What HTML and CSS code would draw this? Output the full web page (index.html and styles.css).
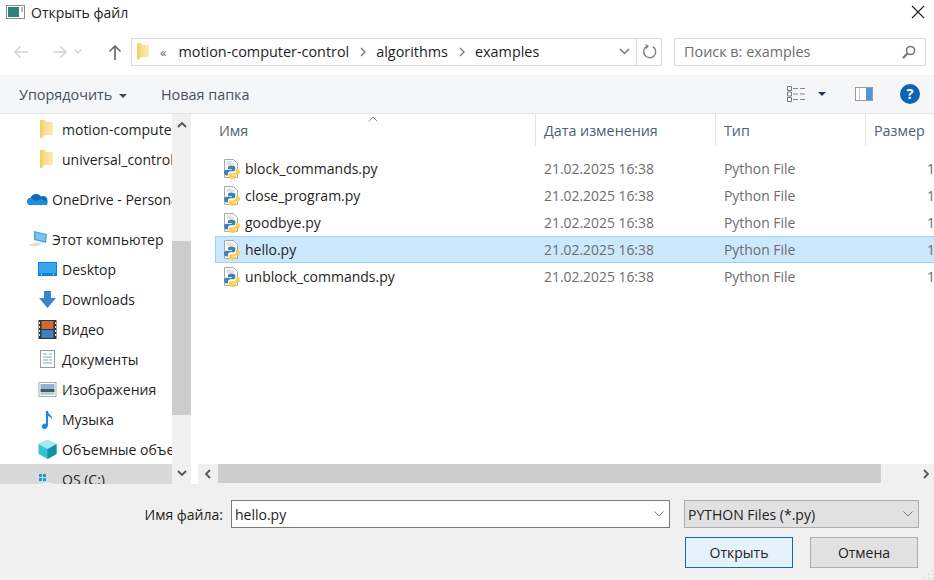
FILE: index.html
```html
<!DOCTYPE html>
<html lang="ru">
<head>
  <meta charset="UTF-8" />
  <title>Открыть файл</title>
  <link rel="stylesheet" href="styles.css">
</head>
<body>

<svg class="defs" width="0" height="0">
  <defs>
    <linearGradient id="folderFill" x1="0" y1="0" x2="1" y2="0">
      <stop offset="0" stop-color="#f3cc62" />
      <stop offset=".35" stop-color="#f8dc8a" />
      <stop offset="1" stop-color="#fcebb0" />
    </linearGradient>
    <symbol id="folder" viewBox="0 0 13 18">
      <path d="M0 0h5l1 2h7v13H4l-2 3H0z" fill="url(#folderFill)" />
    </symbol>
    <symbol id="pyfile" viewBox="0 0 18 20">
      <path d="M1.500.5h9l4 4v14h-13z" fill="#fff" stroke="#a8a8a8" />
      <path d="M3.500 3h5M3.500 5h8" stroke="#c4c4c4" />
      <path d="M8 6.500c-2 0-3 .7-3 2V10h4v.7H3.500C2 10.700 1 12 1 13.500s1 3 2.500 3H5v-2c0-1.200 1-2.200 2.200-2.200h3.300c1 0 1.800-.8 1.800-1.800V8.500c0-1.200-1.800-2-4.300-2z" fill="#3f7fb3" />
      <path d="M8 6.500c-2 0-3 .7-3 2V10h4v.7H3.500C2 10.700 1 12 1 13.500s1 3 2.500 3H5v-2c0-1.200 1-2.200 2.200-2.200h3.300c1 0 1.800-.8 1.800-1.800V8.500c0-1.200-1.800-2-4.300-2z" fill="#f6d04d" transform="rotate(180 9 13.250)" />
    </symbol>
  </defs>
</svg>

<div class="dialog">

  <header class="titlebar">
    <svg class="app-icon" width="19" height="14" viewBox="0 0 19 14">
      <rect x=".5" y=".5" width="18" height="13" fill="#fff" stroke="#8c8c8c" />
      <rect x="2" y="2" width="11" height="10" fill="#2f7f7a" />
      <rect x="15" y="2" width="2" height="5" fill="#b8b8b8" />
    </svg>
    <span class="title">Открыть файл</span>
    <svg class="close" width="14" height="14" viewBox="0 0 14 14">
      <path d="M1 1l12 12M13 1L1 13" stroke="#222" stroke-width="1.100" fill="none" />
    </svg>
  </header>

  <nav class="navbar">
    <div class="nav-buttons">
      <svg width="16" height="14" viewBox="0 0 16 14"><path d="M15 7H2M7.500 1.500L2 7l5.500 5.500" stroke="#d3d3d3" stroke-width="1.500" fill="none" /></svg>
      <svg class="nav-fwd" width="16" height="14" viewBox="0 0 16 14"><path d="M1 7h13M8.500 1.500L14 7l-5.500 5.500" stroke="#d3d3d3" stroke-width="1.500" fill="none" /></svg>
      <svg class="nav-down" width="8" height="5" viewBox="0 0 8 5"><path d="M.5.500L4 4 7.500.5" stroke="#d0d0d0" stroke-width="1.200" fill="none" /></svg>
      <svg class="nav-up" width="14" height="16" viewBox="0 0 14 16"><path d="M7 16V2M1.500 7.500L7 2l5.500 5.500" stroke="#6d6d6d" stroke-width="1.700" fill="none" /></svg>
    </div>
    <div class="address">
      <svg class="addr-folder" width="12" height="17"><use href="#folder" /></svg>
      <span class="crumb-more">«</span>
      <span class="crumb">motion-computer-control</span>
      <svg class="crumb-sep" width="6" height="10" viewBox="0 0 6 10"><path d="M1 1l4 4-4 4" stroke="#777" stroke-width="1.300" fill="none" /></svg>
      <span class="crumb">algorithms</span>
      <svg class="crumb-sep" width="6" height="10" viewBox="0 0 6 10"><path d="M1 1l4 4-4 4" stroke="#777" stroke-width="1.300" fill="none" /></svg>
      <span class="crumb">examples</span>
      <svg class="addr-chevron" width="11" height="7" viewBox="0 0 11 7"><path d="M1 1l4.500 4.500L10 1" stroke="#777" stroke-width="1.500" fill="none" /></svg>
      <div class="addr-refresh">
        <svg width="15" height="15" viewBox="0 0 15 15"><path d="M5.500 2.100A6 6 0 1 0 11 2.700" stroke="#808080" stroke-width="1.400" fill="none" /><path d="M3.500 .5l2.500 1.700L4 4.500" stroke="#808080" stroke-width="1.200" fill="none" /></svg>
      </div>
    </div>
    <div class="search">
      <span>Поиск в: examples</span>
      <svg width="14" height="14" viewBox="0 0 14 14"><circle cx="8.500" cy="5.500" r="4" stroke="#777" stroke-width="1.600" fill="none" /><path d="M5.500 8.500L1 13" stroke="#777" stroke-width="2.200" /></svg>
    </div>
  </nav>

  <div class="toolbar">
    <div class="tool organize">Упорядочить <i class="caret"></i></div>
    <div class="tool new-folder">Новая папка</div>
    <div class="tool-icons">
      <svg class="view-icon" width="18" height="16" viewBox="0 0 18 16">
        <path d="M.5.500h4v4h-4zM.5 6h4v4h-4zM.5 11.500h4v4h-4z" fill="#fff" stroke="#777" />
        <path d="M6 2.500h5M13 2.500h5M6 8h5M13 8h5M6 13.500h5M13 13.500h5" stroke="#888" />
      </svg>
      <i class="caret caret-dark"></i>
      <svg class="pane-icon" width="18" height="14" viewBox="0 0 18 14">
        <rect x=".5" y=".5" width="17" height="13" fill="#fff" stroke="#9a9a9a" />
        <rect x="4" y="1" width="1" height="12" fill="#c8c8c8" />
        <rect x="11" y="1" width="6" height="12" fill="#4a97dd" />
      </svg>
      <svg class="help-icon" width="20" height="20" viewBox="0 0 20 20">
        <circle cx="10" cy="10" r="10" fill="#0d64b4" />
        <text x="10" y="15" text-anchor="middle" class="help-mark">?</text>
      </svg>
    </div>
  </div>

  <main class="panes">
    <aside class="sidebar">
      <ul class="tree">
        <li class="item indent"><svg class="tree-folder" width="13" height="18"><use href="#folder" /></svg>motion-computer-control</li>
        <li class="item indent"><svg class="tree-folder" width="13" height="18"><use href="#folder" /></svg>universal_controls</li>
        <li class="item group">
          <svg width="21" height="14" viewBox="0 0 21 14"><path d="M4 13a3.500 3.500 0 0 1-.5-7A6 6 0 0 1 14 4.500 4.500 4.500 0 0 1 20.500 9c0 2.500-1.500 4-3.500 4z" fill="#0f6cbd" /><path d="M4 13a3.500 3.500 0 0 1-.5-7l5 3 5-2 7 3c0 4-1.500 3-3.500 3z" fill="#1b8fdc" /></svg>
          OneDrive - Personal
        </li>
        <li class="item group">
          <svg width="21" height="18" viewBox="0 0 21 18"><path d="M7 1l13 3-1 9-12-3z" fill="#4aa6dc" /><path d="M8.500 2.500l10 2.300-.7 6.500-9.300-2.300z" fill="#7cc4ee" /><path d="M1 15l9-3 6 2-9 3z" fill="#dfe3e6" /></svg>
          Этот компьютер
        </li>
        <li class="item indent">
          <svg width="19" height="15" viewBox="0 0 19 15"><rect width="19" height="14" fill="#0a84e0" /><rect x="1" y="1" width="17" height="10" fill="#3aa6f0" /><path d="M3 12.500h1M15 12.500h1" stroke="#fff" /></svg>
          Desktop
        </li>
        <li class="item indent">
          <svg width="17" height="17" viewBox="0 0 17 17"><path d="M5 0h7v7h5l-8.500 10L0 7h5z" fill="#3c85cc" /></svg>
          Downloads
        </li>
        <li class="item indent">
          <svg width="18" height="19" viewBox="0 0 18 19"><rect width="18" height="19" fill="#333" /><rect x="3" y="1" width="12" height="8" fill="#c96b3a" /><rect x="3" y="10" width="12" height="8" fill="#3a7fc4" /><path d="M1 2v15M17 2v15" stroke="#ddd" stroke-dasharray="2 2" /></svg>
          Видео
        </li>
        <li class="item indent">
          <svg width="15" height="18" viewBox="0 0 15 18"><rect x=".5" y=".5" width="14" height="17" fill="#fff" stroke="#999" /><path d="M3 4h4M9 4h3M3 7h9M3 10h5M9 10h3M3 13h9" stroke="#7ba6cf" /></svg>
          Документы
        </li>
        <li class="item indent">
          <svg width="18" height="15" viewBox="0 0 18 15"><rect x=".5" y=".5" width="17" height="14" fill="#fff" stroke="#aaa" /><rect x="2" y="2" width="14" height="5" fill="#8fb5d2" /><rect x="2" y="7" width="14" height="3" fill="#3d5c70" /><rect x="2" y="10" width="14" height="3" fill="#bcd4c6" /></svg>
          Изображения
        </li>
        <li class="item indent">
          <svg width="19" height="19" viewBox="-2 0 19 19"><path d="M6 1h2c0 4 5 4 4 8.500-1-2.500-2.500-3-4-3.500v9c0 2-1.500 4-3.500 4S1 17 2 15.500 4.500 13 6 14z" fill="#1a8be0" /></svg>
          Музыка
        </li>
        <li class="item indent">
          <svg width="18" height="19" viewBox="0 0 18 19"><path d="M9 0l9 4v10l-9 5-9-5V4z" fill="#38c3d3" /><path d="M9 9l9-5v10l-9 5z" fill="#128fa8" /><path d="M9 0l9 4-9 5-9-5z" fill="#9feaf0" /></svg>
          Объемные объекты
        </li>
        <li class="item indent current">
          <svg width="19" height="17" viewBox="0 0 19 17"><path d="M0 13l10-2 9 3-9 3z" fill="#eef0f2" /><path d="M1 3h3v3H1zM5 3h3v3H5zM1 7h3v3H1zM5 7h3v3H5z" fill="#14a0e8" /></svg>
          OS (C:)
        </li>
      </ul>
      <div class="vscroll">
        <svg class="vscroll-up" width="10" height="6" viewBox="0 0 10 6"><path d="M1 5l4-4 4 4" stroke="#555" stroke-width="1.800" fill="none" /></svg>
        <div class="vthumb"></div>
        <svg class="vscroll-down" width="10" height="6" viewBox="0 0 10 6"><path d="M1 1l4 4 4-4" stroke="#555" stroke-width="1.800" fill="none" /></svg>
      </div>
    </aside>

    <section class="files">
      <div class="file-scroll">
        <svg class="sort-mark" width="10" height="6" viewBox="0 0 10 6"><path d="M.5 5.500L5 1l4.500 4.500" stroke="#8a8f99" fill="none" /></svg>
        <div class="cols head">
          <div class="col">Имя</div>
          <div class="col">Дата изменения</div>
          <div class="col">Тип</div>
          <div class="col">Размер</div>
        </div>
        <div class="list">
          <div class="cols row">
            <div class="name"><svg width="18" height="20"><use href="#pyfile" /></svg>block_commands.py</div>
            <div class="meta">21.02.2025 16:38</div>
            <div class="meta">Python File</div>
            <div class="size">1 КБ</div>
          </div>
          <div class="cols row">
            <div class="name"><svg width="18" height="20"><use href="#pyfile" /></svg>close_program.py</div>
            <div class="meta">21.02.2025 16:38</div>
            <div class="meta">Python File</div>
            <div class="size">1 КБ</div>
          </div>
          <div class="cols row">
            <div class="name"><svg width="18" height="20"><use href="#pyfile" /></svg>goodbye.py</div>
            <div class="meta">21.02.2025 16:38</div>
            <div class="meta">Python File</div>
            <div class="size">1 КБ</div>
          </div>
          <div class="cols row selected">
            <div class="name"><svg width="18" height="20"><use href="#pyfile" /></svg>hello.py</div>
            <div class="meta">21.02.2025 16:38</div>
            <div class="meta">Python File</div>
            <div class="size">1 КБ</div>
          </div>
          <div class="cols row">
            <div class="name"><svg width="18" height="20"><use href="#pyfile" /></svg>unblock_commands.py</div>
            <div class="meta">21.02.2025 16:38</div>
            <div class="meta">Python File</div>
            <div class="size">1 КБ</div>
          </div>
        </div>
      </div>
      <div class="hscroll">
        <div class="harrow"><svg width="6" height="10" viewBox="0 0 6 10"><path d="M5 1L1 5l4 4" stroke="#555" stroke-width="1.800" fill="none" /></svg></div>
        <div class="hthumb"></div>
        <div class="harrow"><svg width="6" height="10" viewBox="0 0 6 10"><path d="M1 1l4 4-4 4" stroke="#555" stroke-width="1.800" fill="none" /></svg></div>
      </div>
    </section>
  </main>

  <footer class="footer">
    <div class="field-row">
      <label class="field-label">Имя файла:</label>
      <div class="filename">
        <span>hello.py</span>
        <svg width="10" height="6" viewBox="0 0 10 6"><path d="M.5.500L5 5 9.500.5" stroke="#777" fill="none" /></svg>
      </div>
      <div class="filetype">
        <span>PYTHON Files (*.py)</span>
        <svg width="10" height="6" viewBox="0 0 10 6"><path d="M.5.500L5 5 9.500.5" stroke="#777" fill="none" /></svg>
      </div>
    </div>
    <div class="button-row">
      <button class="btn primary">Открыть</button>
      <button class="btn">Отмена</button>
    </div>
    <svg class="grip" width="12" height="12" viewBox="0 0 12 12"><path d="M10 2h1v1h-1zM6 6h1v1H6zM10 6h1v1h-1zM2 10h1v1H2zM6 10h1v1H6zM10 10h1v1h-1z" fill="#c4c4c4" /></svg>
  </footer>

</div>

</body>
</html>
```

FILE: styles.css
```css
* {
  box-sizing: border-box;
}

html, body {
  margin: 0;
  height: 100%;
}

body {
  background: #fff;
  color: #1e1e1e;
  font-family: 'Open Sans', 'Noto Sans', sans-serif;
  font-size: 14px;
  overflow: hidden;
}

.defs {
  position: absolute;
}

.dialog {
  display: flex;
  flex-direction: column;
  width: 934px;
  height: 580px;
}

/* title */
.titlebar {
  display: flex;
  align-items: center;
  height: 37px;
  padding: 0 9px 13px 6px;
  flex: none;
}

.title {
  margin-left: 6px;
  color: #222;
}

.close {
  margin-left: auto;
}

/* nav row */
.navbar {
  display: flex;
  align-items: center;
  height: 38px;
  padding: 0 8px 9px 0;
  flex: none;
  font-size: 14.4px;
}

.nav-buttons {
  display: flex;
  align-items: center;
  width: 131px;
  padding-left: 13px;
}

.nav-fwd {
  margin-left: 23px;
}

.nav-down {
  margin-left: 6px;
}

.nav-up {
  margin-left: 26px;
  flex: none;
}

.address {
  display: flex;
  align-items: center;
  width: 531px;
  height: 28px;
  border: 1px solid #d9d9d9;
  padding-left: 5px;
}

.addr-folder {
  flex: none;
}

.crumb-more {
  margin-left: 11px;
  margin-right: 2px;
  color: #666;
  font-size: 13px;
}

.crumb {
  margin-left: 10px;
  margin-right: 11px;
}

.addr-chevron {
  margin-left: auto;
}

.addr-refresh {
  display: flex;
  align-items: center;
  justify-content: center;
  width: 25px;
  height: 100%;
  margin-left: 6px;
  border-left: 1px solid #d9d9d9;
}

.search {
  display: flex;
  align-items: center;
  justify-content: space-between;
  width: 252px;
  height: 28px;
  margin-left: 12px;
  padding: 0 9px;
  border: 1px solid #d9d9d9;
  color: #6d6d6d;
}

/* toolbar */
.toolbar {
  display: flex;
  align-items: center;
  height: 39px;
  padding-left: 19px;
  background: #f5f6f7;
  border-bottom: 1px solid #e5e5e5;
  flex: none;
  color: #44515f;
  font-size: 14.4px;
}

.organize {
  width: 142px;
}

.caret {
  display: inline-block;
  margin-left: 3px;
  vertical-align: middle;
  border: 4px solid transparent;
  border-top: 4px solid #3f4a57;
  border-bottom: 0;
}

.tool-icons {
  display: flex;
  align-items: center;
  margin-left: auto;
  padding-right: 14px;
}

.caret-dark {
  margin-left: 13px;
  border-top-color: #1d3557;
}

.pane-icon {
  margin-left: 29px;
}

.help-icon {
  margin-left: 27px;
}

.help-mark {
  fill: #fff;
  font-size: 15px;
  font-weight: 700;
}

/* panes */
.panes {
  display: flex;
  flex: none;
  height: 370px;
}

.sidebar {
  display: flex;
  width: 192px;
  flex: none;
}

.tree {
  list-style: none;
  margin: 0;
  padding: 0;
  width: 172px;
  height: 370px;
  overflow: hidden;
}

.item {
  display: flex;
  align-items: center;
  height: 30px;
  width: 172px;
  white-space: nowrap;
  overflow: hidden;
  color: #1f1f1f;
}

.item svg {
  flex: none;
  margin-right: 4px;
}

.indent {
  padding-left: 38px;
}

.indent svg {
  width: 19px;
  margin-right: 5px;
}

.indent .tree-folder {
  width: 13px;
  margin-left: 2px;
  margin-right: 9px;
}

.item.group {
  padding-left: 27px;
  margin-top: 10px;
}

.current {
  background: #d9d9d9;
}

.vscroll {
  position: relative;
  width: 19px;
  height: 370px;
  background: #f0f0f0;
  flex: none;
}

.vscroll-up {
  position: absolute;
  top: 8px;
  left: 5px;
}

.vscroll-down {
  position: absolute;
  top: 356px;
  left: 5px;
}

.vthumb {
  position: absolute;
  top: 127px;
  left: 0;
  width: 19px;
  height: 174px;
  background: #cdcdcd;
}

.files {
  display: flex;
  flex-direction: column;
  flex: 1;
  min-width: 0;
}

.file-scroll {
  position: relative;
  flex: 1;
  padding-left: 23px;
  overflow: hidden;
}

.sort-mark {
  position: absolute;
  top: 2px;
  left: 176px;
}

.cols {
  display: grid;
  grid-template-columns: 321px 180px 150px 68px;
}

.head {
  height: 32px;
  color: #4c607a;
  font-size: 14.3px;
}

.col {
  display: flex;
  align-items: center;
  padding-left: 8px;
  border-right: 1px solid #e5e5e5;
}

.col:first-child {
  padding-left: 4px;
}

.col:last-child {
  border-right: 0;
}

.list {
  padding-top: 9px;
}

.row {
  height: 27px;
  align-items: center;
  border: 1px solid transparent;
  margin-right: -20px;
  grid-template-columns: 320px 180px 150px 68px;
}

.row.selected {
  background: #cce8ff;
  border-color: #99d1ff;
}

.name {
  display: flex;
  align-items: center;
  padding-left: 7px;
}

.name svg {
  margin-right: 4px;
  flex: none;
}

.meta {
  padding-left: 8px;
  color: #6d6d6d;
  font-size: 13.9px;
}

.size {
  padding-left: 61px;
  white-space: nowrap;
  color: #6d6d6d;
}

.hscroll {
  display: flex;
  height: 20px;
  margin-left: 6px;
  background: #f0f0f0;
  flex: none;
}

.harrow {
  display: flex;
  align-items: center;
  justify-content: center;
  width: 20px;
  flex: none;
}

.hthumb {
  width: 663px;
  background: #cdcdcd;
  margin-bottom: 1px;
}

.hthumb + .harrow {
  margin-left: auto;
  width: 53px;
  justify-content: flex-end;
  padding-right: 5px;
}

/* bottom bar */
.footer {
  position: relative;
  flex: 1;
  background: #f0f0f0;
  padding-top: 16px;
  color: #222;
}

.field-row {
  display: flex;
  align-items: center;
  height: 28px;
}

.field-label {
  width: 231px;
  padding-right: 8px;
  text-align: right;
}

.filename {
  display: flex;
  align-items: center;
  justify-content: space-between;
  width: 439px;
  height: 28px;
  padding: 0 5px 0 3px;
  background: #fff;
  border: 1px solid #7a7a7a;
}

.filetype {
  display: flex;
  align-items: center;
  justify-content: space-between;
  width: 235px;
  height: 28px;
  margin-left: 14px;
  padding: 0 5px 0 3px;
  background: #e1e1e1;
  border: 1px solid #adadad;
}

.button-row {
  display: flex;
  gap: 17px;
  margin-top: 9px;
  padding-left: 685px;
}

.btn {
  width: 108px;
  height: 31px;
  padding: 0;
  background: #e1e1e1;
  border: 1px solid #adadad;
  border-radius: 0;
  font: inherit;
  color: #222;
}

.btn.primary {
  background: #e5f1fb;
  border-color: #0f6cab;
}

.grip {
  position: absolute;
  right: 0;
  bottom: 0;
}
```
